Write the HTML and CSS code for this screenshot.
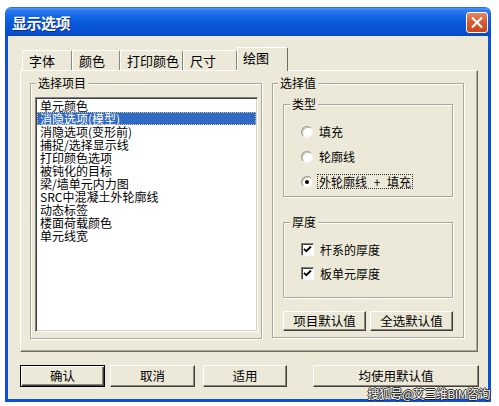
FILE: index.html
```html
<!DOCTYPE html>
<html lang="zh">
<head>
<meta charset="utf-8">
<title>显示选项</title>
<link rel="stylesheet" href="styles.css">
</head>
<body>
<div class="window">
  <div class="titlebar">
    <span class="title">显示选项</span>
    <span class="close">
      <svg width="21" height="21" viewBox="0 0 21 21"><path d="M6 6 L15 15 M15 6 L6 15" stroke="#fff" stroke-width="2.2" stroke-linecap="square"/></svg>
    </span>
  </div>
  <div class="frame">
    <div class="tabs">
      <div class="tab w1">字体</div>
      <div class="tab w2">颜色</div>
      <div class="tab w3">打印颜色</div>
      <div class="tab w4">尺寸</div>
      <div class="tab active">绘图</div>
    </div>
    <div class="panel">
      <fieldset class="group group-left">
        <legend>选择项目</legend>
        <ul class="listbox">
          <li>单元颜色</li>
          <li class="selected">消隐选项(模型)</li>
          <li>消隐选项(变形前)</li>
          <li>捕捉/选择显示线</li>
          <li>打印颜色选项</li>
          <li>被钝化的目标</li>
          <li>梁/墙单元内力图</li>
          <li>SRC中混凝土外轮廓线</li>
          <li>动态标签</li>
          <li>楼面荷载颜色</li>
          <li>单元线宽</li>
        </ul>
      </fieldset>
      <fieldset class="group group-right">
        <legend>选择值</legend>
        <fieldset class="sub sub-type">
          <legend>类型</legend>
          <div class="opt"><span class="radio"></span><span class="lbl">填充</span></div>
          <div class="opt"><span class="radio"></span><span class="lbl">轮廓线</span></div>
          <div class="opt"><span class="radio on"></span><span class="lbl focus">外轮廓线 + 填充</span></div>
        </fieldset>
        <fieldset class="sub sub-thick">
          <legend>厚度</legend>
          <div class="opt opt-chk"><span class="check"><svg width="11" height="11" viewBox="0 0 11 11"><path d="M2 4.8 L4.3 7.2 L9 2.5" stroke="#000" stroke-width="1.8" fill="none"/></svg></span><span class="lbl">杆系的厚度</span></div>
          <div class="opt opt-chk"><span class="check"><svg width="11" height="11" viewBox="0 0 11 11"><path d="M2 4.8 L4.3 7.2 L9 2.5" stroke="#000" stroke-width="1.8" fill="none"/></svg></span><span class="lbl">板单元厚度</span></div>
        </fieldset>
        <div class="btnrow">
          <button class="btn small">项目默认值</button>
          <button class="btn small">全选默认值</button>
        </div>
      </fieldset>
    </div>
    <div class="footer">
      <button class="btn big default">确认</button>
      <button class="btn big b-cancel">取消</button>
      <button class="btn big b-apply">适用</button>
      <button class="btn wide">均使用默认值</button>
    </div>
  </div>
  <span class="watermark">搜狐号@艾三维BIM咨询</span>
</div>
</body>
</html>
```
FILE: styles.css
```css
* { box-sizing: border-box; }

body {
  margin: 0;
  background: #fff;
  font-family: "Noto Sans CJK SC", "Noto Sans", sans-serif;
  font-size: 12px;
  color: #000;
}

.window {
  position: relative;
  width: 486px;
  height: 395px;
  margin: 7px 0 0 5px;
  display: flex;
  flex-direction: column;
}

.titlebar {
  flex: none;
  height: 29px;
  display: flex;
  align-items: center;
  justify-content: space-between;
  padding: 2px 3px 0 7px;
  border-radius: 6px 6px 0 0;
  background: linear-gradient(to bottom, #1a5fe0 0%, #4a8ff5 5%, #2f7cf0 12%, #1668e6 30%, #0b5bdc 55%, #0953d4 80%, #0748c4 100%);
}

.title {
  color: #fff;
  font-weight: bold;
  font-size: 15px;
  line-height: 18px;
  letter-spacing: -0.5px;
  text-shadow: 1px 1px 0 #0a2f8a;
}

.close {
  width: 22px;
  height: 21px;
  border: 1px solid #fff;
  border-radius: 3px;
  background: linear-gradient(to bottom, #e58a66 0%, #d9603a 40%, #c8461f 100%);
  display: flex;
  align-items: center;
  justify-content: center;
}

.close svg { display: block; }

.frame {
  flex: 1;
  background: #ece9d8;
  border: 3px solid #0b50d6;
  border-top: 0;
  padding-top: 11px;
}

/* tabs */
.tabs {
  position: relative;
  z-index: 1;
  display: flex;
  align-items: flex-end;
  height: 23px;
  margin-left: 14px;
}

.tab {
  height: 20px;
  padding-left: 6px;
  font-size: 13px;
  line-height: 19px;
  background: #ece9d8;
  border-top: 1px solid #fff;
  border-left: 1px solid #fff;
  border-right: 1px solid #8a8778;
  border-radius: 2px 2px 0 0;
  white-space: nowrap;
}

.w1 { width: 50px; }
.w2 { width: 48px; }
.w3 { width: 63px; }
.w4 { width: 54px; }

.tab.active {
  width: 51px;
  height: 24px;
  margin-bottom: -1px;
  padding-left: 5px;
  line-height: 20px;
  border-right: 1px solid #6f6c60;
}

.panel {
  position: relative;
  z-index: 0;
  display: flex;
  align-items: flex-start;
  width: 458px;
  height: 282px;
  margin-left: 12px;
  padding: 5px 0 0 9px;
  border: 1px solid;
  border-color: #fff #6f6c60 #6f6c60 #fff;
  box-shadow: inset -1px -1px 0 #aca899;
}

/* group boxes */
fieldset {
  margin: 0;
  min-width: 0;
  border: 1px solid #aca899;
  box-shadow: inset 1px 1px 0 #fff, 1px 1px 0 #fff;
}

legend {
  padding: 0 2px;
  font-size: 12px;
  line-height: 14px;
  background: #ece9d8;
}

.group-left {
  width: 232px;
  padding: 7px 3px 6px 4px;
}

.group-left legend { margin-left: 1px; }

.listbox {
  list-style: none;
  margin: 0;
  width: 223px;
  height: 235px;
  padding: 1px;
  background: #fff;
  border: 1px solid;
  border-color: #808080 #fff #fff #808080;
  box-shadow: inset 1px 1px 0 #404040, inset -1px -1px 0 #d4d0c8;
}

.listbox li {
  height: 13px;
  padding-left: 3px;
  font-size: 12px;
  line-height: 13px;
  white-space: nowrap;
}

.listbox li.selected {
  background: #316ac5;
  color: #fff;
  outline: 1px dotted #d8c890;
  outline-offset: -1px;
}

.group-right {
  width: 192px;
  margin-left: 10px;
  padding: 7px 10px 6px 10px;
}

.group-right > legend { margin-left: -5px; }

.sub {
  padding: 8px 6px 2px 7px;
}

.sub legend { margin-left: -1px; }

.sub-thick {
  margin-top: 18px;
  padding-bottom: 12px;
}

.opt {
  display: flex;
  align-items: center;
  height: 25px;
  margin-left: 10px;
  gap: 6px;
}

.opt-chk { height: 24px; }

.radio {
  position: relative;
  flex: none;
  width: 12px;
  height: 12px;
  border-radius: 50%;
  background: #fff;
  border: 1px solid;
  border-color: #9a9890 #f4f3ee #f4f3ee #9a9890;
  box-shadow: inset 1px 1px 0 #c8c5b8;
}

.radio.on::after {
  content: "";
  position: absolute;
  left: 3px;
  top: 3px;
  width: 4px;
  height: 4px;
  border-radius: 50%;
  background: #000;
}

.check {
  flex: none;
  width: 13px;
  height: 13px;
  background: #fff;
  border: 1px solid;
  border-color: #808080 #fff #fff #808080;
  box-shadow: inset 1px 1px 0 #404040;
  display: flex;
  align-items: center;
  justify-content: center;
}

.check svg { display: block; }

.lbl {
  font-size: 12px;
  line-height: 13px;
  white-space: nowrap;
}

.lbl.focus {
  outline: 1px dotted #333;
  outline-offset: 0;
  padding: 0 1px;
  margin-left: -1px;
  word-spacing: 4px;
}

.btnrow {
  display: flex;
  gap: 4px;
  margin-top: 13px;
}

/* buttons */
.btn {
  font-family: "Noto Sans CJK SC", "Noto Sans", sans-serif;
  font-size: 12.5px;
  color: #000;
  background: #ece9d8;
  border: 1px solid;
  border-color: #fff #404040 #404040 #fff;
  box-shadow: inset -1px -1px 0 #8a8778;
  padding: 0;
  margin: 0;
  line-height: 16px;
}

.btn.small {
  width: 83px;
  height: 20px;
}

.footer {
  display: flex;
  margin-top: 13px;
  padding-left: 12px;
}

.btn.big {
  width: 85px;
  height: 22px;
}

.btn.default {
  border: 1px solid #000;
  box-shadow: inset 1px 1px 0 #fff, inset -1px -1px 0 #404040, inset -2px -2px 0 #8a8778;
}

.b-cancel { margin-left: 5px; }
.b-apply { margin-left: 8px; width: 84px !important; }

.btn.wide {
  width: 166px;
  height: 22px;
  margin-left: 26px;
}

.watermark {
  position: absolute;
  right: 1px;
  bottom: 1px;
  font-size: 12px;
  line-height: 14px;
  color: #fff;
  letter-spacing: -0.5px;
  text-shadow: 1px 0 0 #222, -1px 0 0 #222, 0 1px 0 #222, 0 -1px 0 #222;
}
```
